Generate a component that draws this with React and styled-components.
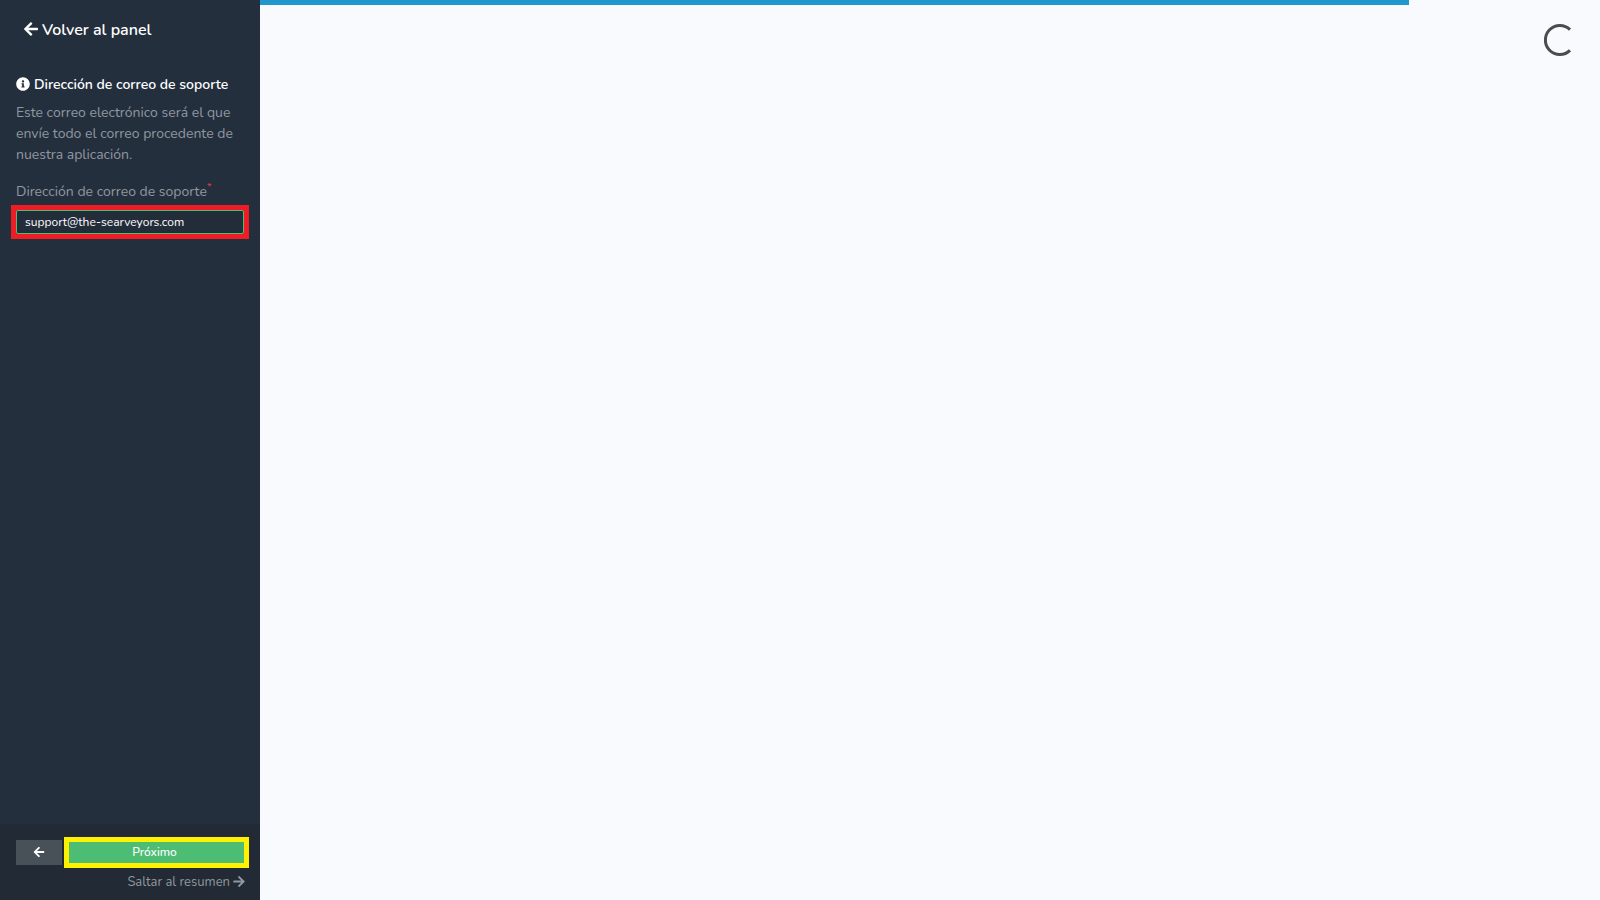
import { useState } from "react";
import styled, { createGlobalStyle } from "styled-components";
import { FaArrowLeft, FaArrowRight, FaInfoCircle } from "react-icons/fa";

const GlobalStyle = createGlobalStyle`
    *, *::before, *::after {
        box-sizing: border-box;
    }

    body {
        margin: 0;
        background: #f8fafd;
        font-family: Nunito, "Open Sans", sans-serif;
        font-size: 14px;
        line-height: 21px;
    }

    button, input {
        font-family: inherit;
    }
`;

const Layout = styled.div`
    display: flex;
    min-height: 100vh;
`;

const Sidebar = styled.aside`
    display: flex;
    flex-direction: column;
    flex: 0 0 260px;
    background: #242f3e;
    color: #91979e;
`;

const BackLink = styled.a`
    display: flex;
    align-items: center;
    gap: 4px;
    padding: 18px 24px;
    color: #fff;
    font-size: 16px;
    font-weight: 600;
    line-height: 24px;
    text-decoration: none;

    svg {
        width: 14px;
        height: 16px;
        margin-bottom: 2px;
    }
`;

const Form = styled.form`
    display: flex;
    flex-direction: column;
    flex: 1;
`;

const Step = styled.section`
    flex: 1;
    padding: 14px 16px;
`;

const StepTitle = styled.h1`
    display: flex;
    align-items: center;
    gap: 4px;
    margin: 0 0 7px;
    color: #fff;
    font-size: 14px;
    font-weight: 600;
    line-height: 21px;
    white-space: nowrap;

    svg {
        margin-bottom: 2px;
    }
`;

const Description = styled.p`
    margin: 0 0 16px;
`;

const Label = styled.label`
    display: block;
    margin-bottom: 8px;
    white-space: nowrap;
`;

const Required = styled.sup`
    color: #f5365c;
    font-size: 10px;
    line-height: 0;
`;

const Highlight = styled.div`
    outline: 5px solid #ee1c25;
    background: #ee1c25;
`;

const TextInput = styled.input`
    display: block;
    width: 100%;
    height: 24px;
    padding: 0 8px;
    border: 1px solid #4dbd74;
    border-radius: 2px;
    outline: none;
    background: #232d3a;
    color: #fff;
    font-size: 12px;
`;

const Footer = styled.footer`
    padding: 16px 15px 7px 16px;
    background: #212a35;
`;

const Actions = styled.div`
    display: flex;
    align-items: center;
    gap: 7px;
    margin: 0 1px 7px 0;
`;

const Button = styled.button`
    display: flex;
    align-items: center;
    justify-content: center;
    height: 25px;
    padding: 0 4px 2px 0;
    border: 0;
    color: #fff;
    font-size: 12px;
    font-weight: 500;
    cursor: pointer;
`;

const PreviousButton = styled(Button)`
    flex: 0 0 46px;
    padding-right: 0;
    background: #485058;
`;

const NextButton = styled(Button)`
    flex: 1;
    height: 21px;
    outline: 5px solid #fff200;
    background: #4dbd74;
`;

const SkipLink = styled.a`
    display: flex;
    align-items: center;
    justify-content: flex-end;
    gap: 3px;
    color: #91979e;
    font-size: 13px;
    text-decoration: none;

    svg {
        width: 12px;
        height: 13px;
        margin-bottom: 2px;
    }
`;

const Content = styled.main`
    display: flex;
    flex: 1;
    flex-direction: column;
    min-width: 0;
`;

const Progress = styled.div`
    height: 5px;
`;

const ProgressFill = styled.div`
    height: 100%;
    background: #2198cb;
`;

const Spinner = styled.svg`
    align-self: flex-end;
    width: 32px;
    height: 32px;
    margin: 19px 24px;
`;

const STEP = 6;
const TOTAL_STEPS = 7;

function ProgressBar({ value, max }) {
    return (
    <Progress role="progressbar" aria-label="Progreso" aria-valuenow={value} aria-valuemin={0} aria-valuemax={max}>
        <ProgressFill style={{ width: `${(value / max) * 100}%` }} />
    </Progress>
    )
}

export default function App() {
    const [email, setEmail] = useState('support@the-searveyors.com');

    return (
    <Layout>
        <GlobalStyle />
        <Sidebar>
            <BackLink href="#panel"><FaArrowLeft />Volver al panel</BackLink>
            <Form onSubmit={(e) => e.preventDefault()}>
                <Step>
                    <StepTitle><FaInfoCircle />Dirección de correo de soporte</StepTitle>
                    <Description>
                        Este correo electrónico será el que envíe todo el correo procedente de nuestra aplicación.
                    </Description>
                    <Label htmlFor="support-email">Dirección de correo de soporte<Required>*</Required></Label>
                    <Highlight>
                        <TextInput id="support-email" type="email" required value={email} onChange={(e) => setEmail(e.target.value)} />
                    </Highlight>
                </Step>
                <Footer>
                    <Actions>
                        <PreviousButton type="button" aria-label="Anterior"><FaArrowLeft /></PreviousButton>
                        <NextButton type="submit">Próximo</NextButton>
                    </Actions>
                    <SkipLink href="#resumen">Saltar al resumen<FaArrowRight /></SkipLink>
                </Footer>
            </Form>
        </Sidebar>
        <Content>
            <ProgressBar value={STEP} max={TOTAL_STEPS} />
            <Spinner viewBox="0 0 32 32" fill="none" role="img" aria-label="Cargando">
                <path d="M26 5.6A14.5 14.5 0 1 0 26 26.4" stroke="#4a4d50" strokeWidth="3" />
            </Spinner>
        </Content>
    </Layout>
    )
}
